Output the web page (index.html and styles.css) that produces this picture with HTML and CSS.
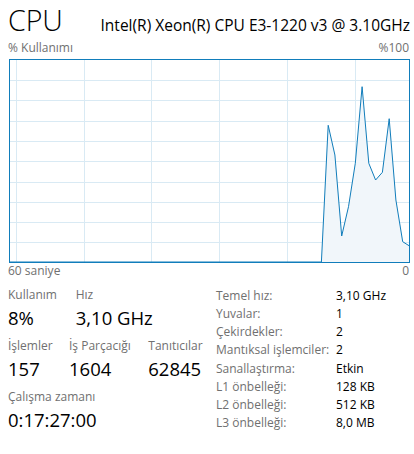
FILE: index.html
```html
<!DOCTYPE html>
<html lang="tr">

<head>
    <meta charset="UTF-8">
    <meta name="viewport" content="width=device-width, initial-scale=1.0">
    <title>CPU</title>
    <link rel="stylesheet" href="styles.css">
</head>

<body>
    <div class="panel">
        <div class="header">
            <h1 class="title">CPU</h1>
            <div class="cpu-name">Intel(R) Xeon(R) CPU E3-1220 v3 @ 3.10GHz</div>
        </div>

        <div class="axis axis-top">
            <span>% Kullanımı</span>
            <span>%100</span>
        </div>

        <svg class="graph" width="401" height="204" viewBox="0 0 401 204">
            <g class="grid">
                <line x1="7.5" y1="0" x2="7.5" y2="204" />
                <line x1="75.5" y1="0" x2="75.5" y2="204" />
                <line x1="142.5" y1="0" x2="142.5" y2="204" />
                <line x1="210.5" y1="0" x2="210.5" y2="204" />
                <line x1="278.5" y1="0" x2="278.5" y2="204" />
                <line x1="346.5" y1="0" x2="346.5" y2="204" />
                <line x1="0" y1="21.5" x2="401" y2="21.5" />
                <line x1="0" y1="41.5" x2="401" y2="41.5" />
                <line x1="0" y1="62.5" x2="401" y2="62.5" />
                <line x1="0" y1="82.5" x2="401" y2="82.5" />
                <line x1="0" y1="102.5" x2="401" y2="102.5" />
                <line x1="0" y1="123.5" x2="401" y2="123.5" />
                <line x1="0" y1="143.5" x2="401" y2="143.5" />
                <line x1="0" y1="163.5" x2="401" y2="163.5" />
                <line x1="0" y1="183.5" x2="401" y2="183.5" />
            </g>
            <polygon class="area" points="0,203 312.4,203 319.2,66.3 325.9,96 332.7,177 339.5,147.7 346.3,104.3 353.1,27.7 359.8,104.3 366.6,121 373.4,113.3 380.2,59.7 386.9,141 393.7,182.7 400.5,187 400.5,203" />
            <polyline class="usage" points="0,203 312.4,203 319.2,66.3 325.9,96 332.7,177 339.5,147.7 346.3,104.3 353.1,27.7 359.8,104.3 366.6,121 373.4,113.3 380.2,59.7 386.9,141 393.7,182.7 400.5,187" />
            <rect class="frame" x="0.5" y="0.5" width="400" height="203" />
        </svg>

        <div class="axis axis-bottom">
            <span>60 saniye</span>
            <span>0</span>
        </div>

        <div class="details">
            <div class="stats">
                <div class="stat-row">
                    <div class="stat w-67">
                        <div class="stat-label">Kullanım</div>
                        <div class="stat-value">8%</div>
                    </div>
                    <div class="stat">
                        <div class="stat-label">Hız</div>
                        <div class="stat-value">3,10 GHz</div>
                    </div>
                </div>
                <div class="stat-row">
                    <div class="stat w-61">
                        <div class="stat-label">İşlemler</div>
                        <div class="stat-value">157</div>
                    </div>
                    <div class="stat w-79">
                        <div class="stat-label">İş Parçacığı</div>
                        <div class="stat-value">1604</div>
                    </div>
                    <div class="stat">
                        <div class="stat-label">Tanıtıcılar</div>
                        <div class="stat-value">62845</div>
                    </div>
                </div>
                <div class="stat-row">
                    <div class="stat">
                        <div class="stat-label">Çalışma zamanı</div>
                        <div class="stat-value">0:17:27:00</div>
                    </div>
                </div>
            </div>

            <dl class="specs">
                <dt>Temel hız:</dt><dd>3,10 GHz</dd>
                <dt>Yuvalar:</dt><dd>1</dd>
                <dt>Çekirdekler:</dt><dd>2</dd>
                <dt>Mantıksal işlemciler:</dt><dd>2</dd>
                <dt>Sanallaştırma:</dt><dd>Etkin</dd>
                <dt>L1 önbelleği:</dt><dd>128 KB</dd>
                <dt>L2 önbelleği:</dt><dd>512 KB</dd>
                <dt>L3 önbelleği:</dt><dd>8,0 MB</dd>
            </dl>
        </div>
    </div>
</body>

</html>
```

FILE: styles.css
```css
* {
    margin: 0;
    padding: 0;
    box-sizing: border-box;
}
html,
body {
    background: #fff;
    color: #000;
    font-family: 'Open Sans', 'Noto Sans', Arial, sans-serif;
    font-size: 12px;
}
.panel {
    width: 414px;
    padding: 0 4px 0 8px;
}
.header {
    display: flex;
    justify-content: space-between;
    align-items: baseline;
    height: 40px;
    padding-top: 2px;
}
.title {
    font-size: 28.5px;
    font-weight: 300;
    line-height: 36px;
}
.cpu-name {
    font-size: 15.5px;
    line-height: 20px;
}
.axis {
    display: flex;
    justify-content: space-between;
    color: #707070;
    line-height: 16px;
    padding-right: 1px;
}
.axis-top { margin-bottom: 3px; }
.graph {
    display: block;
    margin-left: 1px;
}
.grid line {
    stroke: #d9eaf4;
    stroke-width: 1;
}
.area { fill: #f1f6fa; }
.usage {
    fill: none;
    stroke: #117dbb;
    stroke-width: 1;
}
.frame {
    fill: none;
    stroke: #117dbb;
    stroke-width: 1;
}
.details {
    display: flex;
    margin-top: 8px;
}
.stats {
    width: 208px;
    display: flex;
    flex-direction: column;
    gap: 8px;
}
.stat-row { display: flex; }
.w-67 { width: 67.7px; }
.w-61 { width: 61px; }
.w-79 { width: 79.3px; }
.stat-label {
    color: #707070;
    line-height: 16px;
}
.stat-value {
    font-size: 18.5px;
    line-height: 24px;
    margin-top: 3px;
}
.specs {
    display: grid;
    grid-template-columns: 120px auto;
    line-height: 18px;
}
.specs dt { color: #707070; }
.specs dd { color: #000; }
```
